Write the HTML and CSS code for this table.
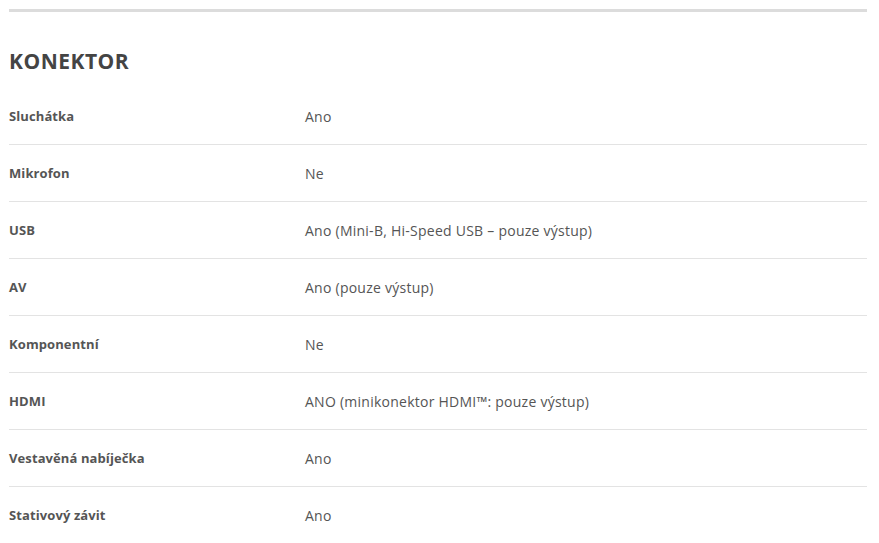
FILE: index.html
```html
<!DOCTYPE html>
<html lang="cs">
<head>
<meta charset="utf-8">
<link rel="stylesheet" href="styles.css">
</head>
<body>
<div class="page">
  <div class="topbar"></div>
  <h2 class="title">KONEKTOR</h2>
  <div class="specs">
    <div class="row"><div class="label">Sluchátka</div><div class="value">Ano</div></div>
    <div class="row"><div class="label">Mikrofon</div><div class="value">Ne</div></div>
    <div class="row"><div class="label">USB</div><div class="value">Ano (Mini-B, Hi-Speed USB – pouze výstup)</div></div>
    <div class="row"><div class="label">AV</div><div class="value">Ano (pouze výstup)</div></div>
    <div class="row"><div class="label">Komponentní</div><div class="value">Ne</div></div>
    <div class="row"><div class="label">HDMI</div><div class="value">ANO (minikonektor HDMI™: pouze výstup)</div></div>
    <div class="row"><div class="label">Vestavěná nabíječka</div><div class="value">Ano</div></div>
    <div class="row"><div class="label">Stativový závit</div><div class="value">Ano</div></div>
  </div>
</div>
</body>
</html>
```
FILE: styles.css
```css
html, body {
  margin: 0;
  padding: 0;
  background: #fff;
}
body {
  font-family: "Open Sans", "Liberation Sans", sans-serif;
  color: #555;
}
.page {
  padding: 9px 12px 0 9px;
}
.topbar {
  height: 3px;
  background: #dcdcdc;
}
.title {
  margin: 0;
  padding-top: 37px;
  height: 40px;
  font-size: 21px;
  line-height: 24px;
  font-weight: 700;
  color: #444;
  letter-spacing: 0.5px;
}
.specs {
  margin-top: -1px;
}
.row {
  display: flex;
  height: 56px;
  align-items: center;
  border-bottom: 1px solid #e3e3e3;
  font-size: 13px;
}
.row:last-child {
  border-bottom: none;
}
.label {
  width: 296px;
  font-weight: 700;
  color: #555;
  letter-spacing: 0.1px;
}
.value {
  color: #555;
  font-size: 14px;
  letter-spacing: 0.25px;
}
```
